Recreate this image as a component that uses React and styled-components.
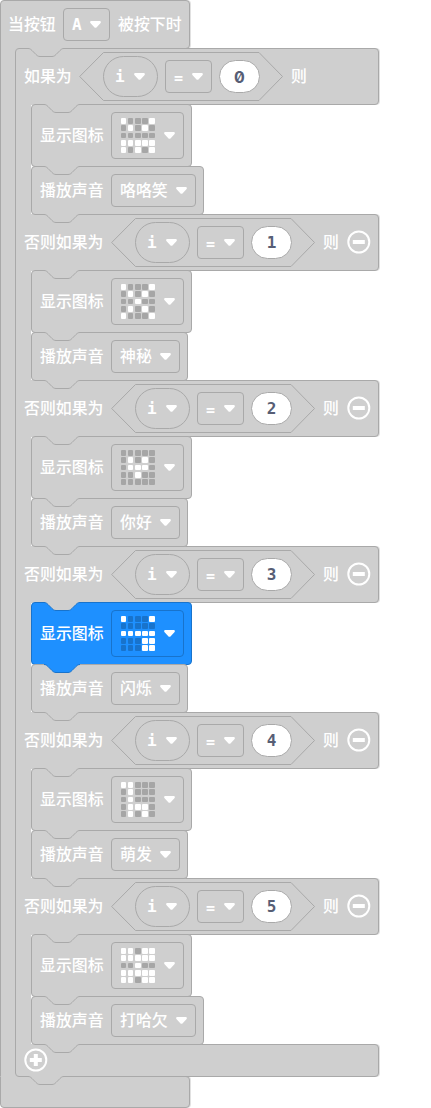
import React from "react";
import styled, { createGlobalStyle, ThemeProvider, css } from "styled-components";

const theme = {
  idle: { fill: "#cfcfcf", line: "#a9a9a9", led: "#a6a6a6" },
  active: { fill: "#1e90ff", line: "#1873cc", led: "#1873cc" },
};

const tone = (key) => ({ theme: t, $active }) => ($active ? t.active : t.idle)[key];

const Page = createGlobalStyle`
  body { margin: 0; background: #fff; }
  * { box-sizing: border-box; }
`;

const Workspace = styled.main`
  width: 431px;
  height: 1108px;
  overflow: hidden;
  color: #fff;
  font: 500 15.9px/24px "Noto Sans CJK SC", sans-serif;
`;

const HatBlock = styled.section`
  display: flex;
  flex-direction: column;
  align-items: flex-start;
`;

/* Grey bar of a C-shaped block; neighbours share one pixel of outline. */
const Bar = styled.div`
  position: relative;
  display: flex;
  align-items: center;
  flex-shrink: 0;
  width: ${(p) => p.$width}px;
  height: ${(p) => p.$height}px;
  margin-bottom: -1px;
  padding-left: ${(p) => p.$pad ?? 8}px;
  background: ${tone("fill")};
  border: 1px solid ${tone("line")};
  border-radius: ${(p) => (p.$first ? 4 : 0)}px 4px 4px ${(p) => (p.$last ? 4 : 0)}px;
  box-shadow: 1px 0 0 rgba(169, 169, 169, 0.35);

  ${(p) =>
    !p.$first &&
    css`
      &::before {
        content: "";
        position: absolute;
        left: 0;
        top: -1px;
        width: 20px;
        height: 1px;
        background: ${tone("fill")};
      }
    `}
  ${(p) =>
    !p.$last &&
    css`
      &::after {
        content: "";
        position: absolute;
        left: 0;
        bottom: -1px;
        width: 20px;
        height: 1px;
        background: ${tone("fill")};
      }
    `}
`;

const Mouth = styled.div`
  position: relative;
  z-index: 1;
  display: flex;
  margin-bottom: ${(p) => (p.$outer ? 0 : -1)}px;
`;

const Spine = styled.div`
  width: 16px;
  margin-right: ${(p) => p.$overlap ?? 0}px;
  background: ${tone("fill")};
  border-left: 1px solid ${tone("line")};
`;

const Stack = styled.div`
  display: flex;
  flex-direction: column;
  align-items: flex-start;
`;

const Statement = styled.div`
  position: relative;
  display: flex;
  align-items: center;
  gap: 7px;
  height: ${(p) => p.$height}px;
  margin-bottom: ${(p) => (p.$end ? 0 : -1)}px;
  padding: 0 7px 0 8px;
  background: ${tone("fill")};
  border: 1px solid ${tone("line")};
  border-radius: 4px;
`;

const Label = styled.span`
  padding-bottom: 1px;
  white-space: nowrap;
`;

const Caption = styled(Label)`
  width: ${(p) => p.$chars * 16}px;
`;

const Field = styled.div`
  display: flex;
  align-items: center;
  justify-content: space-between;
  width: ${(p) => p.$width}px;
  height: ${(p) => p.$height ?? 33}px;
  padding: 0 8px;
  border: 1px solid ${tone("line")};
  border-radius: 4px;
  white-space: nowrap;
`;

const VariableField = styled(Field)`
  padding: 0 12px 0 11px;
  border-radius: 20.5px;
`;

const Mono = styled.span`
  font: bold 16px/20px "DejaVu Sans Mono", monospace;
`;

const Operator = styled(Mono)`
  padding-top: 2px;
  font-size: 15px;
`;

const NumberField = styled(Mono)`
  display: flex;
  align-items: center;
  justify-content: center;
  width: 41px;
  height: 33px;
  border: 1px solid ${tone("line")};
  border-radius: 17px;
  background: #fff;
  color: #575e75;
  ${(p) =>
    p.$zero &&
    css`
      font-family: Inter, sans-serif;
      font-feature-settings: "zero";
    `}
`;

const Condition = styled.div`
  position: relative;
  display: flex;
  align-items: center;
  gap: 7px;
  width: 204px;
  height: 49px;
  margin: 0 8px 0 7px;
  padding-left: 24px;
`;

const Hexagon = styled.svg`
  position: absolute;
  inset: 0;
  fill: none;
  stroke: ${tone("line")};
`;

const NotchShape = styled.svg`
  position: absolute;
  z-index: 3;
  top: -1px;
  left: ${(p) => p.$left}px;
  fill: ${tone("fill")};
`;

const NotchLine = styled.path`
  fill: none;
  stroke: ${tone("line")};
`;

const LedGrid = styled.div`
  display: grid;
  grid-template-columns: repeat(5, 5.7px);
  gap: 1.5px;
  margin-left: 0.6px;
`;

const Led = styled.i`
  height: 5.7px;
  border-radius: 1px;
  background: ${(p) => (p.$on ? "#fff" : tone("led")(p))};
`;

const RoundIcon = styled.svg`
  flex-shrink: 0;
  margin: 0 0 2px ${(p) => p.$gap}px;
  fill: none;
  stroke: #fff;
`;

const ArrowIcon = styled.svg`
  flex-shrink: 0;
  fill: #fff;
`;

const Arrow = () => (
  <ArrowIcon width="12" height="8" viewBox="-.5 .4 12 8">
    <path d="M2 .5h8c1.300 0 1.800 1.300.9 2.200L7.200 6.700c-.7.7-1.700.7-2.400 0L1.100 2.700C.2 1.800.7.5 2 .5Z" />
  </ArrowIcon>
);

const notch = "c2 0 3 1 4 2l4 4c1 1 2 2 4 2h12c2 0 3-1 4-2l4-4c1-1 2-2 4-2";

const Notch = ({ left = 12, fillActive, lineActive }) => (
  <NotchShape width="36" height="10" $left={left} $active={fillActive}>
    <path d={`M0 0v.5${notch}V0Z`} />
    <NotchLine d={`M0 .5${notch}`} $active={lineActive} />
  </NotchShape>
);

const CircleButton = ({ plus, gap }) => (
  <RoundIcon width="24" height="24" $gap={gap}>
    <circle cx="11.800" cy="12" r="10.500" strokeWidth="2" />
    <path d={plus ? "M5.800 12h12M11.800 6v12" : "M5.800 12h12"} strokeWidth="4" />
  </RoundIcon>
);

const Comparison = ({ value }) => (
  <Condition>
    <Hexagon width="204" height="49">
      <path d="M.7 24.500 24.500.5h155.500L203.500 24.500 180 48.500H24.500Z" />
    </Hexagon>
    <VariableField $width={55} $height={41}>
      <Mono>i</Mono>
      <Arrow />
    </VariableField>
    <Field $width={47}>
      <Operator>=</Operator>
      <Arrow />
    </Field>
    <NumberField $zero={value === 0}>{value}</NumberField>
  </Condition>
);

const branches = [
  { leds: "10001 01010 00000 11111 10101", sound: "咯咯笑" },
  { leds: "10001 01010 00100 01010 10001", sound: "神秘" },
  { leds: "00000 01010 01110 00100 00000", sound: "你好" },
  { leds: "10001 00000 11111 00011 00011", sound: "闪烁", active: true },
  { leds: "11000 01000 01000 01110 01010", sound: "萌发" },
  { leds: "11011 11111 00100 11111 11011", sound: "打哈欠" },
];

const Branch = ({ index, leds, sound, active }) => (
  <>
    <Bar $width={364} $height={57} $first={index === 0}>
      <Notch left={index === 0 ? 12 : 28} />
      <Caption $chars={index === 0 ? 3 : 5}>{index === 0 ? "如果为" : "否则如果为"}</Caption>
      <Comparison value={index} />
      <Caption $chars={1}>则</Caption>
      {index > 0 && <CircleButton gap={8} />}
    </Bar>
    <Mouth>
      <Spine />
      <Stack>
        <Statement $height={63} $active={active}>
          <Notch lineActive={active} />
          <Caption $chars={4}>显示图标</Caption>
          <Field $width={73} $height={47} $active={active}>
            <LedGrid>
              {[...leds.replaceAll(" ", "")].map((bit, i) => (
                <Led key={i} $on={bit === "1"} $active={active} />
              ))}
            </LedGrid>
            <Arrow />
          </Field>
        </Statement>
        <Statement $height={49} $end>
          <Notch fillActive={active} lineActive={active} />
          <Caption $chars={4}>播放声音</Caption>
          <Field $width={37 + sound.length * 16}>
            <Label>{sound}</Label>
            <Arrow />
          </Field>
        </Statement>
      </Stack>
    </Mouth>
  </>
);

const EventField = styled(Field)`
  margin: 0 8px 0 7px;
`;

export default function App() {
  return (
    <ThemeProvider theme={theme}>
      <Page />
      <Workspace>
        <HatBlock>
          <Bar $width={190} $height={49} $first $pad={7}>
            <Caption $chars={3}>当按钮</Caption>
            <EventField $width={47}>
              <Mono>A</Mono>
              <Arrow />
            </EventField>
            <Caption $chars={4}>被按下时</Caption>
          </Bar>
          <Mouth $outer>
            <Spine $overlap={-1} />
            <Stack>
              {branches.map((branch, i) => (
                <Branch key={i} index={i} {...branch} />
              ))}
              <Bar $width={364} $height={33} $last>
                <Notch left={28} />
                <CircleButton plus gap={0} />
              </Bar>
            </Stack>
          </Mouth>
          <Bar $width={190} $height={32} $last>
            <Notch left={27} />
          </Bar>
        </HatBlock>
      </Workspace>
    </ThemeProvider>
  );
}
